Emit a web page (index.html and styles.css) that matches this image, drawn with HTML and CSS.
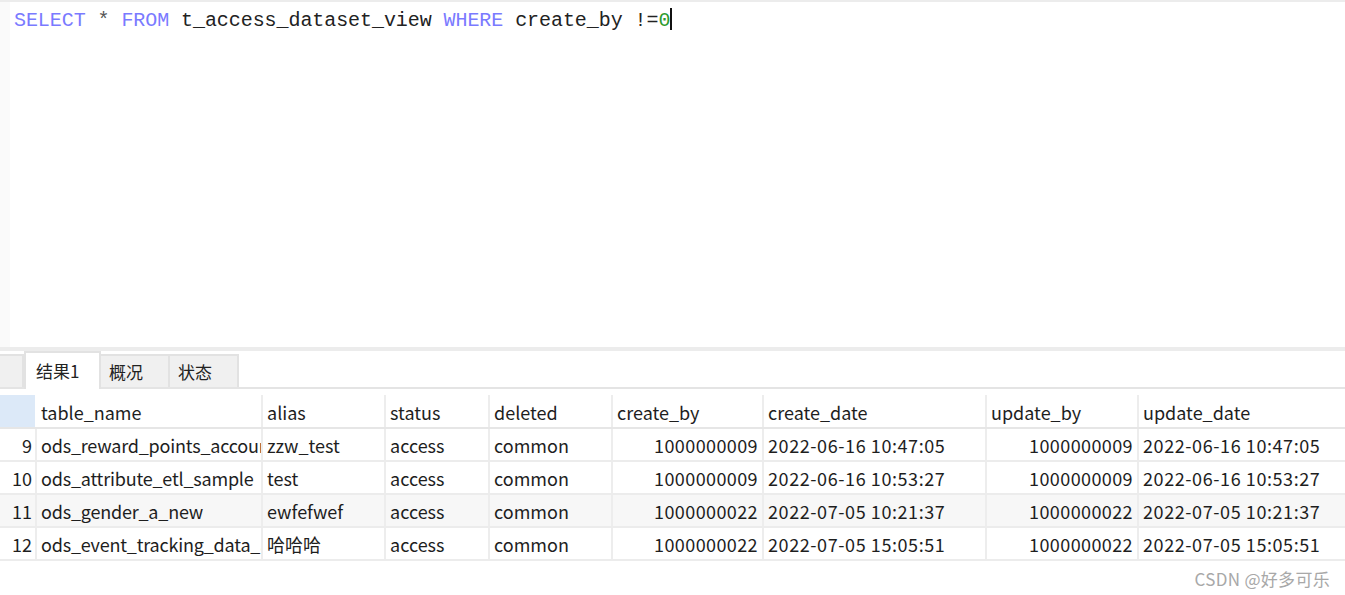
FILE: index.html
```html
<!DOCTYPE html>
<html>
<head>
<meta charset="utf-8">
<link rel="stylesheet" href="styles.css">
</head>
<body>
<div class="app">
  <div class="editor">
    <div class="gutter"></div>
    <div class="code"><span class="kw">SELECT</span> <span class="op">*</span> <span class="kw">FROM</span> t_access_dataset_view <span class="kw">WHERE</span> create_by !=<span class="num">0</span><span class="caret"></span></div>
  </div>
  <div class="splitter"></div>
  <div class="tabs">
    <div class="tab stub"></div>
    <div class="tab active">结果1</div>
    <div class="tab">概况</div>
    <div class="tab">状态</div>
    <div class="tabfill"></div>
  </div>
  <div class="grid">
    <div class="row head">
      <div class="c rn sel"></div>
      <div class="c c1">table_name</div>
      <div class="c c2">alias</div>
      <div class="c c3">status</div>
      <div class="c c4">deleted</div>
      <div class="c c5">create_by</div>
      <div class="c c6">create_date</div>
      <div class="c c7">update_by</div>
      <div class="c c8">update_date</div>
    </div>
    <div class="row">
      <div class="c rn">9</div>
      <div class="c c1 t">ods_reward_points_account</div>
      <div class="c c2">zzw_test</div>
      <div class="c c3">access</div>
      <div class="c c4">common</div>
      <div class="c c5 r n">1000000009</div>
      <div class="c c6 d">2022-06-16 10:47:05</div>
      <div class="c c7 r n">1000000009</div>
      <div class="c c8 d">2022-06-16 10:47:05</div>
    </div>
    <div class="row">
      <div class="c rn">10</div>
      <div class="c c1 t">ods_attribute_etl_sample</div>
      <div class="c c2">test</div>
      <div class="c c3">access</div>
      <div class="c c4">common</div>
      <div class="c c5 r n">1000000009</div>
      <div class="c c6 d">2022-06-16 10:53:27</div>
      <div class="c c7 r n">1000000009</div>
      <div class="c c8 d">2022-06-16 10:53:27</div>
    </div>
    <div class="row alt">
      <div class="c rn">11</div>
      <div class="c c1 t">ods_gender_a_new</div>
      <div class="c c2">ewfefwef</div>
      <div class="c c3">access</div>
      <div class="c c4">common</div>
      <div class="c c5 r n">1000000022</div>
      <div class="c c6 d">2022-07-05 10:21:37</div>
      <div class="c c7 r n">1000000022</div>
      <div class="c c8 d">2022-07-05 10:21:37</div>
    </div>
    <div class="row">
      <div class="c rn">12</div>
      <div class="c c1 t">ods_event_tracking_data_all</div>
      <div class="c c2">哈哈哈</div>
      <div class="c c3">access</div>
      <div class="c c4">common</div>
      <div class="c c5 r n">1000000022</div>
      <div class="c c6 d">2022-07-05 15:05:51</div>
      <div class="c c7 r n">1000000022</div>
      <div class="c c8 d">2022-07-05 15:05:51</div>
    </div>
  </div>
  <div class="footer"><span class="mark">CSDN @好多可乐</span></div>
</div>
</body>
</html>
```
FILE: styles.css
```css
* { box-sizing: border-box; }
html, body { margin: 0; padding: 0; background: #fff; }
.app { width: 1345px; height: 595px; overflow: hidden; display: flex; flex-direction: column; }

.editor {
  height: 347px;
  border-top: 2px solid #ececec;
  display: flex;
}
.gutter { width: 10px; background: #fafafa; flex: none; }
.code {
  padding: 6px 0 0 4px;
  font-family: "Liberation Mono", "Courier New", monospace;
  font-size: 20px;
  line-height: 24px;
  color: #222;
  white-space: pre;
  letter-spacing: -0.07px;
}
.kw { color: #7a7aff; }
.op { color: #555; }
.num { color: #2e9b2e; }
.caret { display: inline-block; width: 2px; height: 22px; background: #111; vertical-align: -4px; }

.splitter { height: 4px; background: #ececec; flex: none; }

.tabs {
  height: 38px;
  padding-top: 2px;
  display: flex;
  align-items: flex-end;
  border-bottom: 2px solid #e4e4e4;
  font-family: "Noto Sans CJK SC", "Noto Sans", sans-serif;
  font-size: 17px;
  color: #222;
  flex: none;
}
.tab {
  height: 33px;
  width: 69px;
  background: #f0f0f0;
  border: 2px solid #e2e2e2;
  border-bottom: none;
  border-left: none;
  display: flex;
  align-items: center;
  padding-left: 8px;
  line-height: 1;
}
.tab.stub { width: 24px; border-left: none; }
.tab.active { width: 77px; background: #fff; padding-left: 10px; border-left: 2px solid #e2e2e2; margin-bottom: -2px; height: 38px; padding-bottom: 2px; }
.tabfill { flex: 1; }

.grid {
  margin-top: 6px;
  font-family: "Noto Sans CJK SC", "Noto Sans", sans-serif;
  font-size: 18px;
  color: #1e1e1e;
  flex: none;
}
.row {
  display: flex;
  height: 33px;
  border-bottom: 2px solid #ececec;
}
.row.head { height: 34px; border-bottom: 2px solid #e6e6e6; }
.row.alt { background: #f7f7f7; }
.c {
  height: 100%;
  display: flex;
  align-items: center;
  padding-left: 4px;
  padding-top: 2px;
  border-right: 2px solid #ededed;
  white-space: nowrap;
  overflow: hidden;
  text-overflow: clip;
  line-height: 1.3;
  flex: none;
}
.row.head .c { padding-top: 4px; }
.c.rn { width: 37px; justify-content: flex-end; padding-left: 0; padding-right: 3px; }
.c.rn.sel { background: #dce9f8; border-right: 2px solid #fff; }
.c.t { letter-spacing: -0.2px; }
.c1 { width: 226px; }
.c2 { width: 123px; }
.c3 { width: 104px; }
.c4 { width: 123px; }
.c5 { width: 151px; }
.c6 { width: 223px; }
.c7 { width: 152px; }
.c8 { width: 206px; border-right: none; }
.c.r { justify-content: flex-end; padding-right: 4px; padding-left: 0; }
.c.n { letter-spacing: 0.4px; }
.c.d { letter-spacing: 0.58px; }

.footer { flex: 1; display: flex; justify-content: flex-end; padding: 5px 15px 0 0; }
.mark { font-family: "Noto Sans CJK SC", "Noto Sans", sans-serif; font-size: 17px; letter-spacing: 0.3px; color: #a8a8a8; }
```
